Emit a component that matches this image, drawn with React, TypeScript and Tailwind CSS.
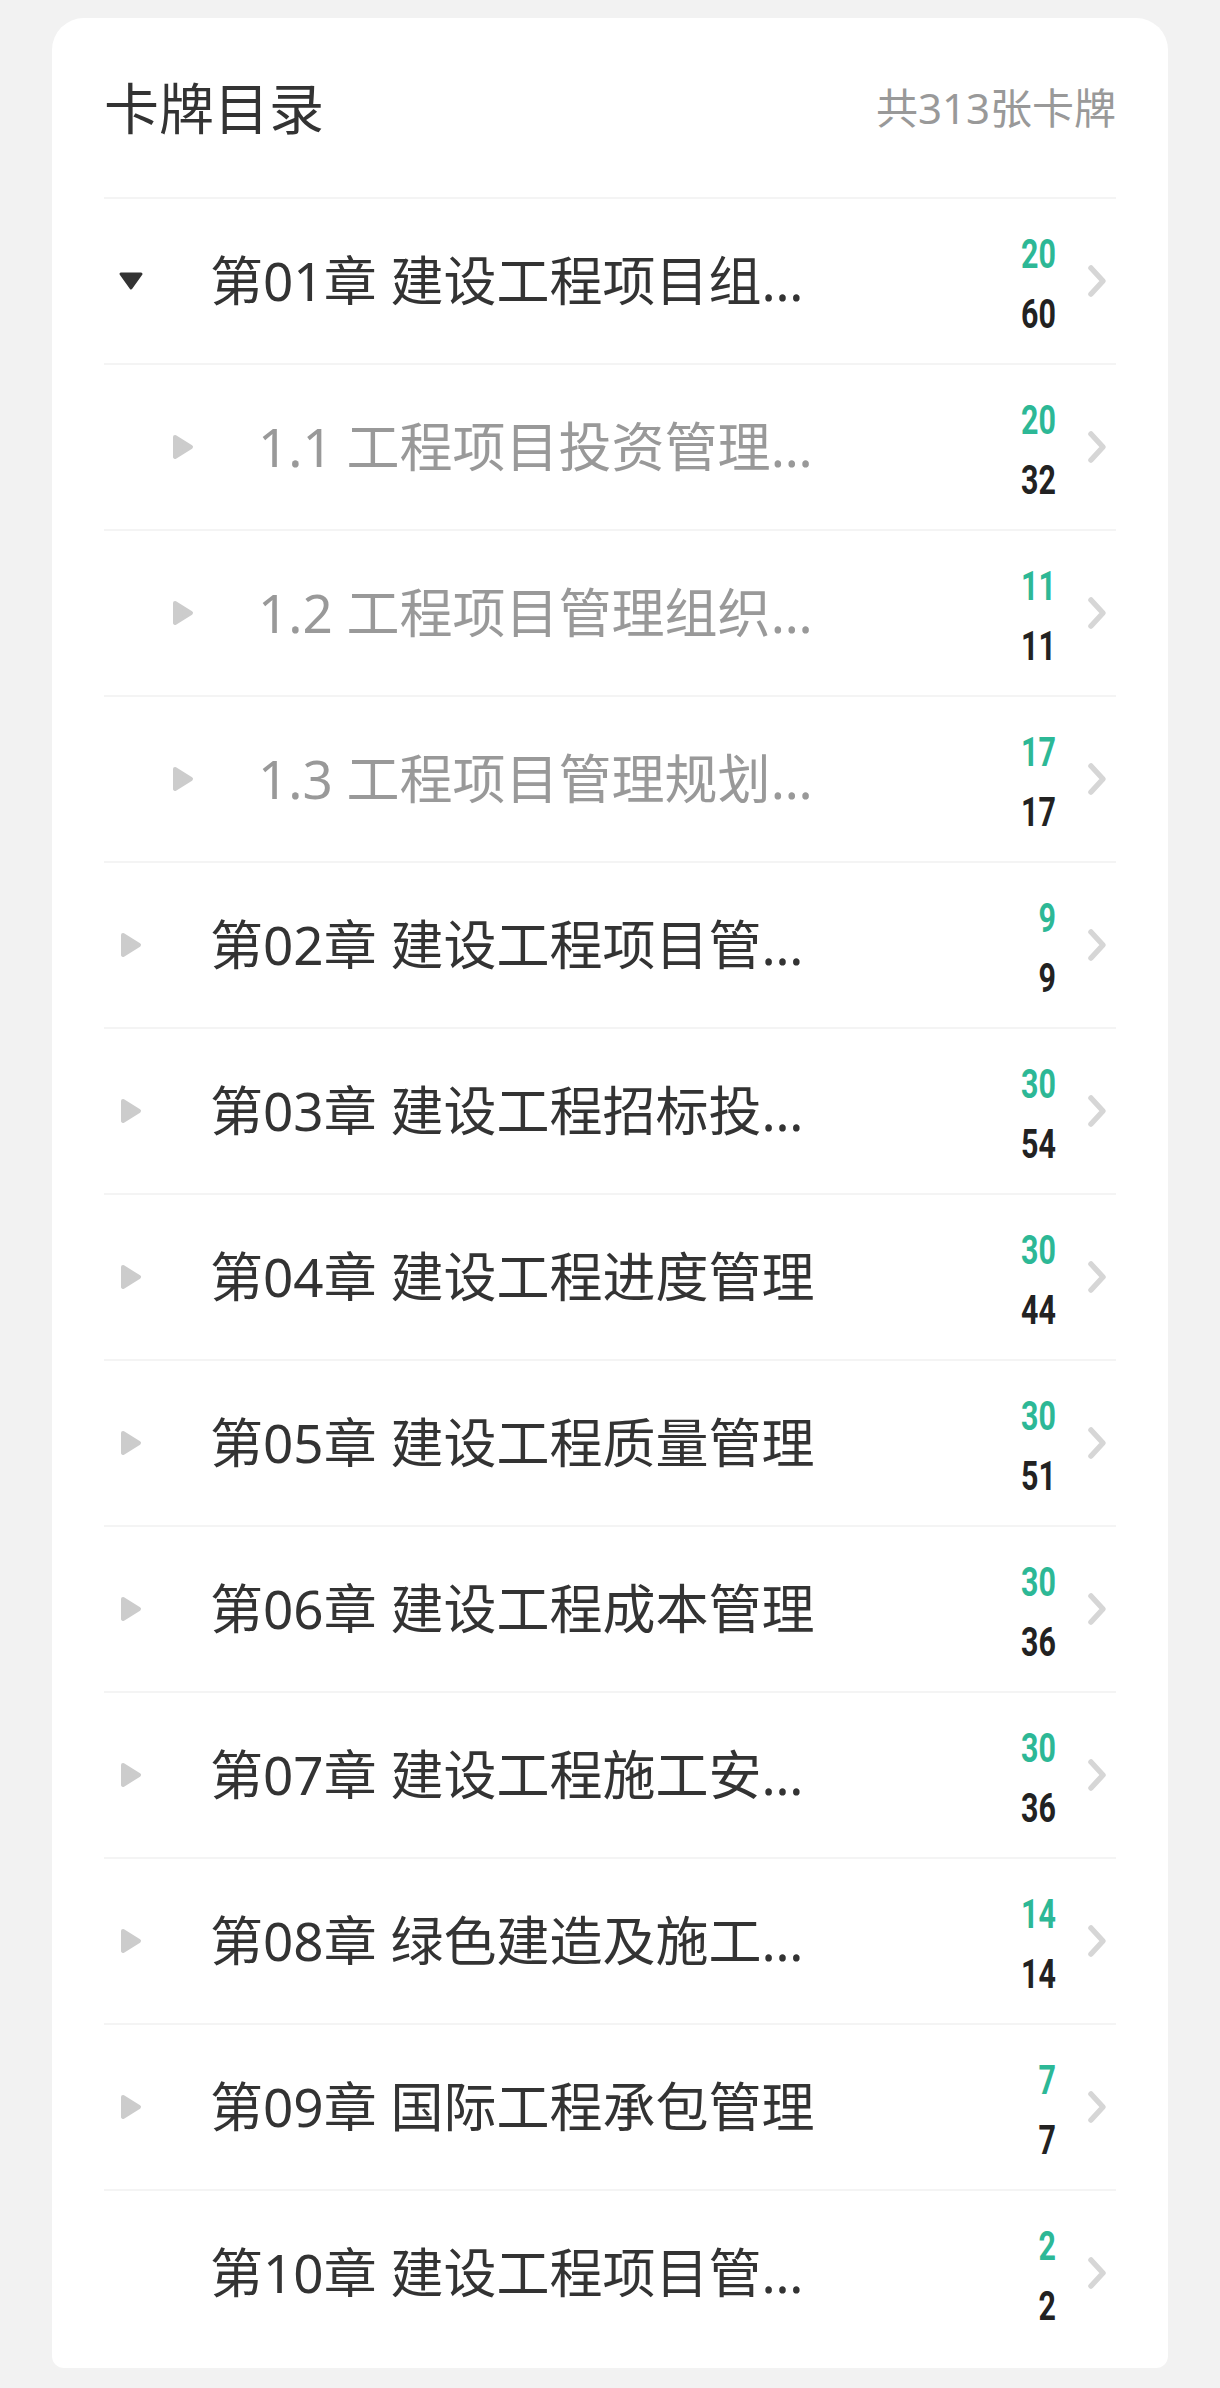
import React from "react";

type Row = {
  title: string;
  green: number;
  total: number;
  level: 0 | 1;
  arrow: "down" | "right" | "none";
};

const rows: Row[] = [
  { title: "第01章 建设工程项目组织、规划与控制", green: 20, total: 60, level: 0, arrow: "down" },
  { title: "1.1 工程项目投资管理制度", green: 20, total: 32, level: 1, arrow: "right" },
  { title: "1.2 工程项目管理组织机构", green: 11, total: 11, level: 1, arrow: "right" },
  { title: "1.3 工程项目管理规划与动态控制", green: 17, total: 17, level: 1, arrow: "right" },
  { title: "第02章 建设工程项目管理基本方法", green: 9, total: 9, level: 0, arrow: "right" },
  { title: "第03章 建设工程招标投标与合同管理", green: 30, total: 54, level: 0, arrow: "right" },
  { title: "第04章 建设工程进度管理", green: 30, total: 44, level: 0, arrow: "right" },
  { title: "第05章 建设工程质量管理", green: 30, total: 51, level: 0, arrow: "right" },
  { title: "第06章 建设工程成本管理", green: 30, total: 36, level: 0, arrow: "right" },
  { title: "第07章 建设工程施工安全管理", green: 30, total: 36, level: 0, arrow: "right" },
  { title: "第08章 绿色建造及施工现场环境管理", green: 14, total: 14, level: 0, arrow: "right" },
  { title: "第09章 国际工程承包管理", green: 7, total: 7, level: 0, arrow: "right" },
  { title: "第10章 建设工程项目管理智能化", green: 2, total: 2, level: 0, arrow: "none" },
];

function TriangleRight() {
  return (
    <svg width="22" height="26" viewBox="0 0 22 26">
      <polygon
        points="3,3 19,13 3,23"
        fill="#cccccc"
        stroke="#cccccc"
        strokeWidth="4"
        strokeLinejoin="round"
      />
    </svg>
  );
}

function TriangleDown() {
  return (
    <svg width="26" height="20" viewBox="0 0 26 20" className="shrink-0">
      <polygon
        points="3,3 23,3 13,17"
        fill="#333333"
        stroke="#333333"
        strokeWidth="3"
        strokeLinejoin="round"
      />
    </svg>
  );
}

function Chevron() {
  return (
    <svg width="20" height="34" viewBox="0 0 20 34">
      <path
        d="M4 4 L16 17 L4 30"
        fill="none"
        stroke="#d6d6d6"
        strokeWidth="5.5"
        strokeLinecap="round"
        strokeLinejoin="round"
      />
    </svg>
  );
}

function ListRow({ row }: { row: Row }) {
  const sub = row.level === 1;
  return (
    <div className="flex h-[166px] items-center border-t-2 border-[#f4f4f4]">
      <div className={sub ? "flex w-[154px] shrink-0 pl-[68px]" : "flex w-[106px] shrink-0 pl-[16px]"}>
        <div className="flex w-[22px] justify-center">
          {row.arrow === "down" && <TriangleDown />}
          {row.arrow === "right" && <TriangleRight />}
        </div>
      </div>
      <div
        className={
          sub
            ? "min-w-0 flex-1 truncate text-[53px] leading-[70px] text-[#999999]"
            : "min-w-0 flex-1 truncate text-[53px] leading-[70px] text-[#333333]"
        }
      >
        {row.title}
      </div>
      <div className="flex w-[224px] shrink-0 flex-col items-end pt-[8px] font-['Roboto',sans-serif] text-[40px] font-bold leading-[60px]">
        <span className="inline-block origin-right scale-x-[0.76] text-[#2db896]">{row.green}</span>
        <span className="inline-block origin-right scale-x-[0.76] text-[#222222]">{row.total}</span>
      </div>
      <div className="ml-[31px] mr-[9px] flex shrink-0 items-center">
        <Chevron />
      </div>
    </div>
  );
}

export default function App() {
  return (
    <div className="min-h-[2388px] w-full bg-[#f2f2f2] pb-[20px] pt-[18px] font-['Noto_Sans','Noto_Sans_CJK_SC',sans-serif]">
      <div className="mx-[52px] rounded-b-[12px] rounded-t-[32px] bg-white px-[52px] pb-[13px]">
        <div className="flex h-[179px] items-center justify-between">
          <div className="text-[55px] leading-none text-[#333333]">卡牌目录</div>
          <div className="text-[42px] leading-none text-[#999999]">共313张卡牌</div>
        </div>
        <div className="flex flex-col">
          {rows.map((r, i) => (
            <ListRow key={i} row={r} />
          ))}
        </div>
      </div>
    </div>
  );
}
